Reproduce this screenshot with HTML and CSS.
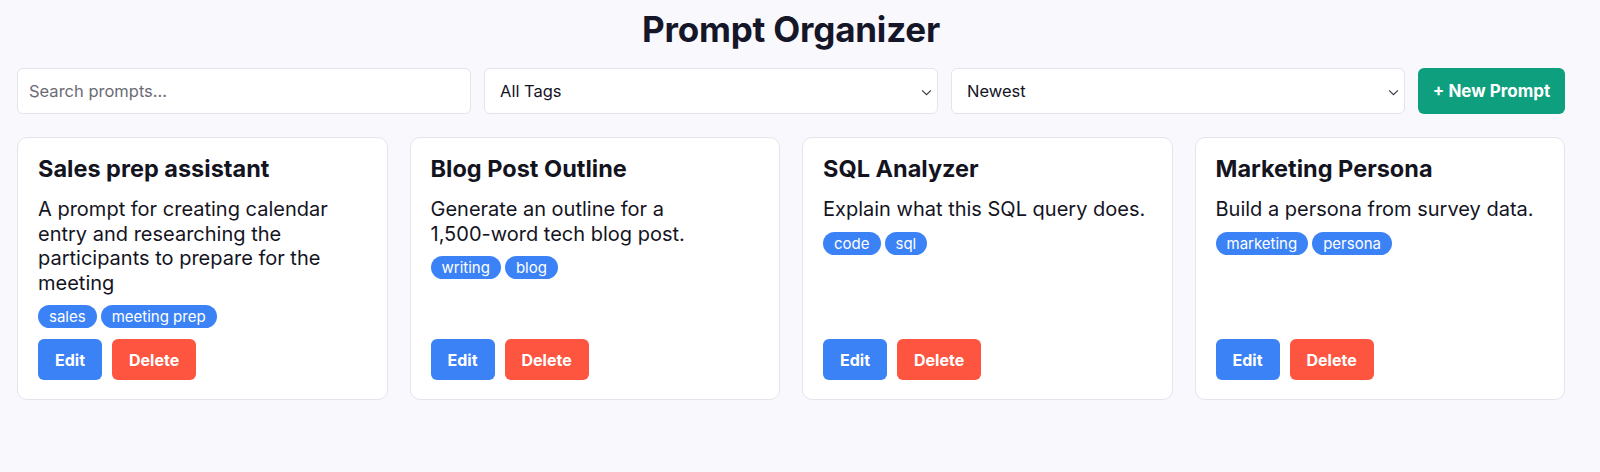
FILE: index.html
```html
<!DOCTYPE html>
<html lang="en">
<head>
<meta charset="utf-8">
<title>Prompt Organizer</title>
<link rel="stylesheet" href="styles.css">
</head>
<body>
<div class="app">
  <h1 class="title">Prompt Organizer</h1>
  <div class="toolbar">
    <input class="field search" type="text" placeholder="Search prompts...">
    <div class="select-wrap">
      <select class="field select"><option>All Tags</option></select>
      <svg class="chev" viewBox="0 0 12 8" width="11" height="7"><path d="M1 1.5 L6 6.5 L11 1.5" fill="none" stroke="#3a3a44" stroke-width="1.3"/></svg>
    </div>
    <div class="select-wrap">
      <select class="field select"><option>Newest</option></select>
      <svg class="chev" viewBox="0 0 12 8" width="11" height="7"><path d="M1 1.5 L6 6.5 L11 1.5" fill="none" stroke="#3a3a44" stroke-width="1.3"/></svg>
    </div>
    <button class="btn-new">+ New Prompt</button>
  </div>
  <div class="grid">
    <div class="card">
      <h3 class="card-title">Sales prep assistant</h3>
      <p class="card-desc">A prompt for creating calendar entry and researching the participants to prepare for the meeting</p>
      <div class="tags"><span class="tag">sales</span><span class="tag">meeting prep</span></div>
      <div class="actions"><button class="btn edit">Edit</button><button class="btn delete">Delete</button></div>
    </div>
    <div class="card">
      <h3 class="card-title">Blog Post Outline</h3>
      <p class="card-desc">Generate an outline for a <span class="nowrap">1,500-word</span> tech blog post.</p>
      <div class="tags"><span class="tag">writing</span><span class="tag">blog</span></div>
      <div class="actions"><button class="btn edit">Edit</button><button class="btn delete">Delete</button></div>
    </div>
    <div class="card">
      <h3 class="card-title">SQL Analyzer</h3>
      <p class="card-desc">Explain what this SQL query does.</p>
      <div class="tags"><span class="tag">code</span><span class="tag">sql</span></div>
      <div class="actions"><button class="btn edit">Edit</button><button class="btn delete">Delete</button></div>
    </div>
    <div class="card">
      <h3 class="card-title">Marketing Persona</h3>
      <p class="card-desc">Build a persona from survey data.</p>
      <div class="tags"><span class="tag">marketing</span><span class="tag">persona</span></div>
      <div class="actions"><button class="btn edit">Edit</button><button class="btn delete">Delete</button></div>
    </div>
  </div>
</div>
</body>
</html>
```
FILE: styles.css
```css
* { box-sizing: border-box; }
html, body {
  margin: 0;
  padding: 0;
  background: #f8f8fd;
  font-family: Inter, "Liberation Sans", sans-serif;
  color: #14141f;
}
.app {
  width: 1548px;
  margin-left: 17px;
  padding-top: 8px;
}
.title {
  margin: 0;
  text-align: center;
  font-size: 35px;
  line-height: 42px;
  font-weight: 700;
  color: #161629;
  letter-spacing: -0.2px;
}
.toolbar {
  display: grid;
  grid-template-columns: 1fr 1fr 1fr 147px;
  gap: 13px;
  margin-top: 18px;
  height: 46px;
}
.field {
  height: 46px;
  border: 1px solid #e4e4ec;
  border-radius: 6px;
  background: #fff;
  font-family: Inter, "Liberation Sans", sans-serif;
  font-size: 16.5px;
  color: #14141f;
  outline: none;
}
.search {
  width: 100%;
  padding: 0 11px;
  min-width: 0;
}
.search::placeholder { color: #6b6b75; }
.select-wrap {
  position: relative;
  min-width: 0;
}
.select {
  width: 100%;
  appearance: none;
  -webkit-appearance: none;
  padding: 0 15px;
}
.chev {
  position: absolute;
  right: 6px;
  top: 21px;
  pointer-events: none;
}
.btn-new {
  height: 46px;
  border: none;
  border-radius: 6px;
  background: #0ea07e;
  color: #fff;
  font-family: Inter, "Liberation Sans", sans-serif;
  font-size: 17px;
  font-weight: 700;
}
.grid {
  display: grid;
  grid-template-columns: repeat(4, 1fr);
  gap: 22px;
  margin-top: 23px;
}
.card {
  background: #fff;
  border: 1px solid #e4e4ec;
  border-radius: 10px;
  padding: 16px 20px 19px 20px;
  display: flex;
  flex-direction: column;
}
.card-title {
  margin: 0;
  font-size: 23.5px;
  line-height: 30px;
  font-weight: 700;
  color: #14141f;
}
.card-desc {
  margin: 13px 0 0;
  font-size: 20px;
  line-height: 24.5px;
  color: #14141f;
}
.nowrap { white-space: nowrap; }
.tags {
  display: flex;
  gap: 4px;
  margin-top: 10px;
}
.tag {
  background: #3b82f6;
  color: #fff;
  font-size: 15px;
  line-height: 23px;
  padding: 0 11px;
  border-radius: 12px;
}
.actions {
  display: flex;
  gap: 10px;
  margin-top: auto;
  padding-top: 11px;
}
.btn {
  height: 41px;
  border: none;
  border-radius: 6px;
  color: #fff;
  font-family: Inter, "Liberation Sans", sans-serif;
  font-size: 16px;
  font-weight: 700;
  padding: 0 17px;
}
.edit { background: #3b82f6; }
.delete { background: #fe5541; }
```
